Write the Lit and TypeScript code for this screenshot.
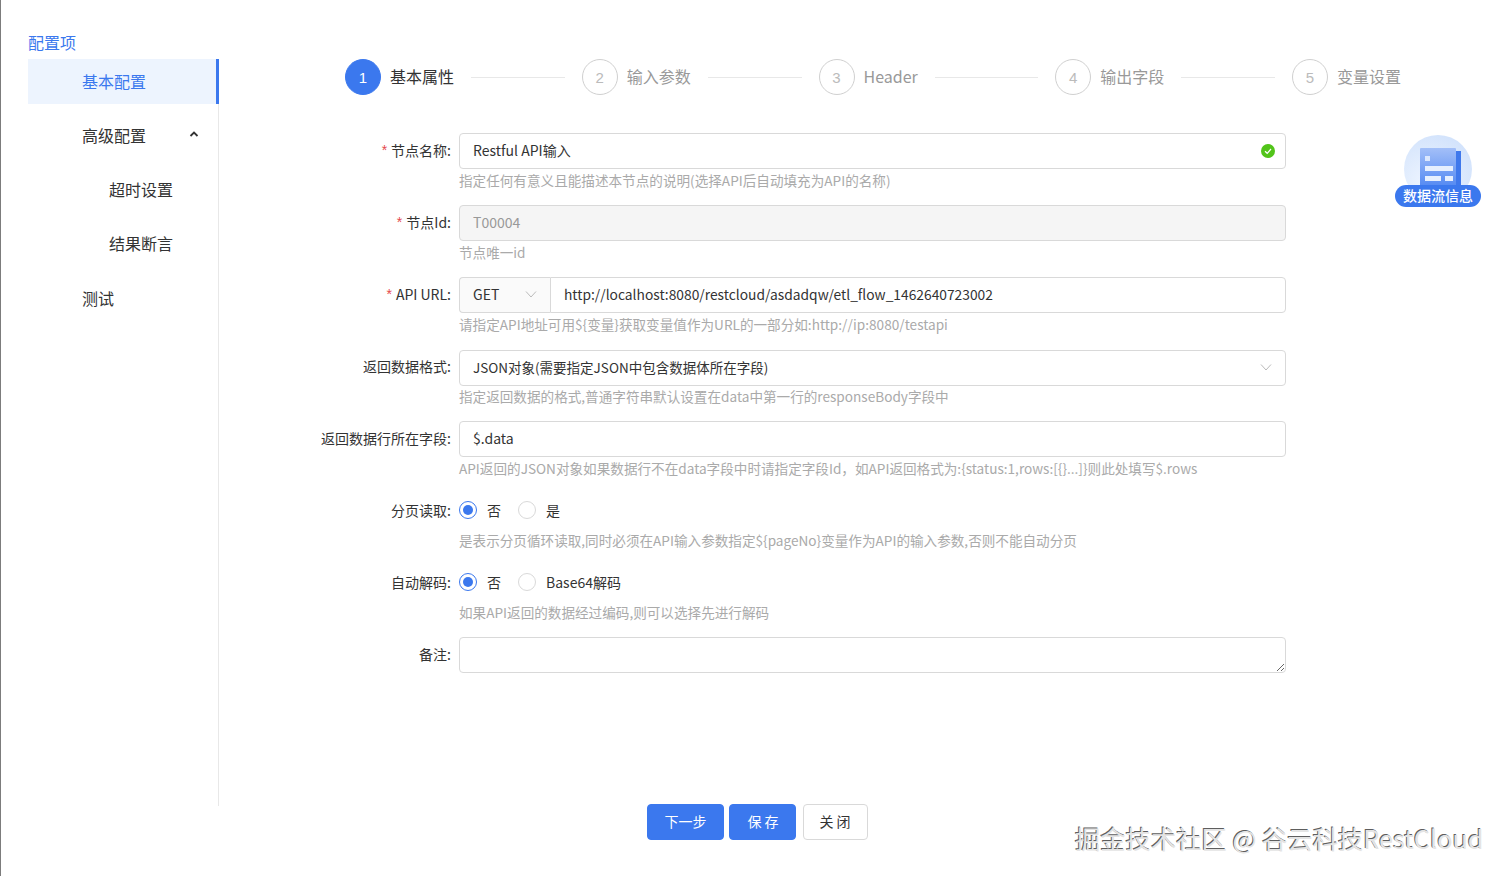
import { LitElement, css, html } from 'lit'
import { customElement } from 'lit/decorators.js'

const steps = ['基本属性', '输入参数', 'Header', '输出字段', '变量设置']

const arrow = html`<svg class="arrow" viewBox="0 0 12 12"><path d="M1 3.5 6 9l5-5.5" /></svg>`

@customElement('app-root')
export class AppRoot extends LitElement {
  static styles = css`
    :host {
      display: block;
      position: relative;
      height: 876px;
      overflow: hidden;
      background: #fff;
      border-left: 1px solid #7c7c7c;
      box-sizing: border-box;
      font-family: "Noto Sans CJK SC", "Noto Sans", sans-serif;
      font-size: 14px;
      color: #333;
    }
    .page { display: flex; height: 100%; }

    /* left menu */
    .side { width: 218px; flex: none; padding: 33px 0 0 27px; box-sizing: border-box; }
    .side-title { color: #3b78ee; font-size: 16px; line-height: 18px; height: 18px; margin-bottom: 8px; }
    .menu { border-right: 1px solid #e8e8e8; height: 747px; width: 191px; box-sizing: border-box; }
    .menu-item {
      position: relative;
      display: flex;
      align-items: center;
      height: 45px;
      box-sizing: border-box;
      margin-bottom: 9px;
      padding: 0 0 2px 54px;
      font-size: 16px;
      color: #333;
    }
    .menu-item.sub { padding-left: 81px; }
    .menu-item.last { padding-bottom: 0; }
    .menu-item.active {
      width: 191px;
      background: #edf4fe;
      color: #3b78ee;
      border-right: 3px solid #3b78ee;
    }
    .chev { position: absolute; right: 19px; top: 17px; width: 10px; height: 8px; fill: none; stroke: #333; stroke-width: 1.8; }

    /* right side */
    .main { flex: 1; min-width: 0; }
    .steps { display: flex; margin: 59px 106px 0 126px; height: 36px; }
    .step { flex: 1; display: flex; align-items: center; min-width: 0; }
    .step:last-child { flex: none; }
    .circle {
      width: 34px;
      height: 34px;
      flex: none;
      border: 1px solid #d0d0d0;
      border-radius: 50%;
      display: flex;
      align-items: center;
      justify-content: center;
      padding-top: 1px;
      box-sizing: content-box;
      height: 33px;
      font-size: 15px;
      font-family: "Liberation Sans", sans-serif;
      color: #bbb;
    }
    .step-name { margin-left: 9px; padding-bottom: 2px; font-size: 16px; color: #999; white-space: nowrap; }
    .step-line { flex: 1; height: 1px; background: #e8e8e8; margin: 0 17px; }
    .step.on .circle { background: #3b78ee; border-color: #3b78ee; color: #fff; }
    .step.on .step-name { color: #333; }

    .form { margin-top: 38px; }
    .row { display: grid; grid-template-columns: 232px 827px; column-gap: 8px; margin-bottom: 12px; }
    .label {
      height: 36px;
      box-sizing: border-box;
      padding-bottom: 2px;
      display: flex;
      align-items: center;
      justify-content: flex-end;
      white-space: nowrap;
      color: #333;
    }
    .req { color: #e5484d; margin-right: 4px; font-family: "Liberation Sans", sans-serif; }
    .help { grid-column: 2; height: 24px; line-height: 22px; font-size: 13.6px; color: #aaa; white-space: nowrap; }
    .control { position: relative; height: 36px; }

    input, textarea {
      display: block;
      width: 100%;
      height: 36px;
      box-sizing: border-box;
      padding: 0 13px 2px;
      border: 1px solid #d9d9d9;
      border-radius: 4px;
      outline: none;
      font: inherit;
      color: #333;
      background: #fff;
    }
    input:disabled { background: #f5f5f5; color: #999; }
    textarea { padding: 6px 13px; }

    .ok { position: absolute; right: 11px; top: 11px; width: 14px; height: 14px; }
    .arrow { width: 12px; height: 12px; fill: none; stroke: #bbb; stroke-width: 1; flex: none; }

    .url { display: flex; }
    .method {
      width: 91px;
      flex: none;
      height: 36px;
      box-sizing: border-box;
      display: flex;
      align-items: center;
      justify-content: space-between;
      padding: 0 13px 2px;
      background: #fafafa;
      border: 1px solid #d9d9d9;
      border-right: 0;
      border-radius: 4px 0 0 4px;
    }
    .url input { border-radius: 0 4px 4px 0; font-size: 13.8px; }

    .select {
      height: 36px;
      margin-top: 1px;
      box-sizing: border-box;
      display: flex;
      align-items: center;
      justify-content: space-between;
      padding: 0 13px 2px;
      border: 1px solid #d9d9d9;
      border-radius: 4px;
      font-size: 13.5px;
    }

    .radios { display: flex; align-items: center; height: 34px; }
    .radio { display: flex; align-items: center; margin-right: 17px; padding-bottom: 1px; }
    .dot {
      width: 18px;
      height: 18px;
      box-sizing: border-box;
      border: 1px solid #d9d9d9;
      border-radius: 50%;
      margin-right: 10px;
      position: relative;
    }
    .dot.on { border-color: #3b78ee; }
    .dot.on::after {
      content: '';
      position: absolute;
      left: 3px;
      top: 3px;
      width: 10px;
      height: 10px;
      border-radius: 50%;
      background: #3b78ee;
    }

    .footer { display: flex; gap: 5px; margin: 131px 0 0 428px; }
    .btn {
      height: 36px;
      box-sizing: border-box;
      border: 1px solid #3b78ee;
      border-radius: 4px;
      background: #3b78ee;
      color: #fff;
      font: inherit;
      padding: 0 0 2px;
    }
    .btn.next { width: 77px; }
    .btn.save { width: 67px; letter-spacing: 3px; padding-left: 4px; }
    .btn.close { width: 65px; background: #fff; border-color: #d9d9d9; color: #333; letter-spacing: 3px; padding-left: 2px; margin-left: 2px; }

    /* floating badge and watermark */
    .flow { position: absolute; left: 1394px; top: 135px; width: 86px; height: 72px; }
    .flow-disc {
      position: absolute;
      left: 9px;
      top: 0;
      width: 68px;
      height: 68px;
      border-radius: 50%;
      background: radial-gradient(circle at 35% 70%, #eef5ff, #cbdefb);
    }
    .flow-icon { position: absolute; left: 25px; top: 13px; width: 41px; height: 41px; }
    .flow-tag {
      position: absolute;
      left: 0;
      top: 50px;
      width: 86px;
      height: 22px;
      line-height: 20px;
      text-align: center;
      border-radius: 11px;
      background: #3b78ee;
      color: #fff;
      font-size: 14px;
      font-weight: 500;
      white-space: nowrap;
    }
    .mark {
      position: absolute;
      left: 1074px;
      top: 819px;
      font-size: 25.3px;
      line-height: 38px;
      color: #e4e4e4;
      white-space: nowrap;
      text-shadow: -1px -1px 0 #5e5e5e;
    }
  `

  private _row(label: string, required: boolean, control: unknown, help?: string) {
    return html`
      <div class="row">
        <div class="label">${required ? html`<span class="req">*</span>` : ''}${label}:</div>
        <div class="control">${control}</div>
        ${help ? html`<div class="help">${help}</div>` : ''}
      </div>
    `
  }

  render() {
    return html`
      <div class="page">
        <aside class="side">
          <div class="side-title">配置项</div>
          <div class="menu">
            <div class="menu-item active">基本配置</div>
            <div class="menu-item">高级配置
              <svg class="chev" viewBox="0 0 10 8"><path d="M1.5 6 5 2.5 8.5 6" /></svg>
            </div>
            <div class="menu-item sub">超时设置</div>
            <div class="menu-item sub">结果断言</div>
            <div class="menu-item last">测试</div>
          </div>
        </aside>

        <main class="main">
          <div class="steps">
            ${steps.map((name, i) => html`
              <div class="step ${i === 0 ? 'on' : ''}">
                <div class="circle">${i + 1}</div>
                <div class="step-name">${name}</div>
                ${i < steps.length - 1 ? html`<div class="step-line"></div>` : ''}
              </div>
            `)}
          </div>

          <div class="form">
            ${this._row('节点名称', true, html`
              <input value="Restful API输入" />
              <svg class="ok" viewBox="0 0 14 14">
                <circle cx="7" cy="7" r="7" fill="#52c41a" />
                <path d="M4 7.2 6.2 9.3 10 5" fill="none" stroke="#fff" stroke-width="1.2" />
              </svg>
            `, '指定任何有意义且能描述本节点的说明(选择API后自动填充为API的名称)')}
            ${this._row('节点Id', true, html`<input value="T00004" disabled />`, '节点唯一id')}
            ${this._row('API URL', true, html`
              <div class="url">
                <div class="method">GET ${arrow}</div>
                <input value="http://localhost:8080/restcloud/asdadqw/etl_flow_1462640723002" />
              </div>
            `, '请指定API地址可用\${变量}获取变量值作为URL的一部分如:http://ip:8080/testapi')}
            ${this._row('返回数据格式', false, html`
              <div class="select">JSON对象(需要指定JSON中包含数据体所在字段) ${arrow}</div>
            `, '指定返回数据的格式,普通字符串默认设置在data中第一行的responseBody字段中')}
            ${this._row('返回数据行所在字段', false, html`<input value="$.data" />`,
              'API返回的JSON对象如果数据行不在data字段中时请指定字段Id，如API返回格式为:{status:1,rows:[{}...]}则此处填写$.rows')}
            ${this._row('分页读取', false, html`
              <div class="radios">
                <div class="radio"><span class="dot on"></span>否</div>
                <div class="radio"><span class="dot"></span>是</div>
              </div>
            `, '是表示分页循环读取,同时必须在API输入参数指定\${pageNo}变量作为API的输入参数,否则不能自动分页')}
            ${this._row('自动解码', false, html`
              <div class="radios">
                <div class="radio"><span class="dot on"></span>否</div>
                <div class="radio"><span class="dot"></span>Base64解码</div>
              </div>
            `, '如果API返回的数据经过编码,则可以选择先进行解码')}
            ${this._row('备注', false, html`<textarea></textarea>`)}
          </div>

          <div class="footer">
            <button class="btn next">下一步</button>
            <button class="btn save">保存</button>
            <button class="btn close">关闭</button>
          </div>
        </main>
      </div>

      <div class="flow">
        <div class="flow-disc"></div>
        <svg class="flow-icon" viewBox="0 0 41 41">
          <defs>
            <linearGradient id="doc" x1="0" y1="0" x2="0" y2="1">
              <stop offset="0" stop-color="#a3bff8" />
              <stop offset="1" stop-color="#4f86f2" />
            </linearGradient>
          </defs>
          <rect x="36" y="3" width="5" height="38" fill="#3f78ec" />
          <rect x="0" y="0" width="36" height="41" rx="1" fill="url(#doc)" />
          <rect x="5" y="8" width="5" height="5" fill="#dbe7fd" />
          <rect x="5" y="18" width="28" height="5" fill="#e6effe" />
          <rect x="5" y="28" width="16" height="5" fill="#e6effe" />
          <rect x="25" y="28" width="8" height="5" fill="#e6effe" />
        </svg>
        <div class="flow-tag">数据流信息</div>
      </div>

      <div class="mark">掘金技术社区 @ 谷云科技RestCloud</div>
    `
  }
}
